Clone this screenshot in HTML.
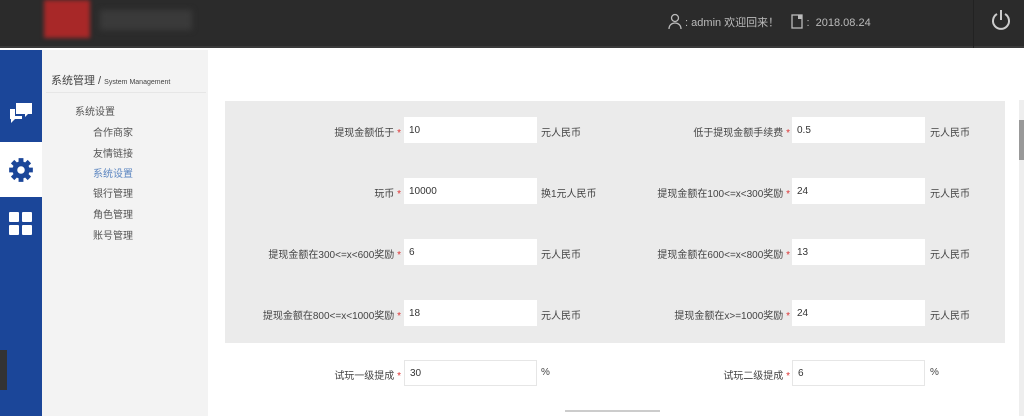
<!DOCTYPE html>
<html><head><meta charset="utf-8"><style>
*{margin:0;padding:0;box-sizing:border-box}
body{width:1024px;height:416px;overflow:hidden;background:#fff;font-family:"Liberation Sans","Noto Sans CJK SC",sans-serif;font-size:10px;color:#444;position:relative}
.hd{position:absolute;left:0;top:0;width:1024px;height:48px;background:#2b2b2b;border-bottom:2px solid #3a3a3a}
.logo{position:absolute;left:44px;top:0;width:46px;height:38px;background:#a82828;filter:blur(2px)}
.logot{position:absolute;left:100px;top:10px;width:92px;height:20px;background:#3a3a3a;filter:blur(3px)}
.user{position:absolute;left:668px;top:13px;color:#bbb;font-size:11px}
.pw{position:absolute;left:973px;top:0;width:51px;height:48px;border-left:1px solid #222}
.bar{position:absolute;left:0;top:50px;width:42px;height:366px;background:#1b4699}
.sel{position:absolute;left:0;top:92px;width:42px;height:55px;background:#fff}
.side{position:absolute;left:42px;top:50px;width:166px;height:366px;background:#f3f3f3}
.side .t{position:absolute;left:9px;top:22px;font-size:11px;color:#444}
.side .t small{font-size:7px}
.side .ln{position:absolute;left:4px;top:42px;width:160px;border-top:1px solid #e6e6e6}
.side .i{position:absolute;font-size:10px;color:#555}
.panel{position:absolute;left:225px;top:101px;width:780px;height:242px;background:#ebebeb}
.lb{position:absolute;text-align:right;font-size:10px;color:#444;width:240px}
.lb b{color:#d33;font-weight:normal}
.in{position:absolute;width:133px;height:26px;background:#fff;font-size:10px;padding:8px 0 0 5px;color:#333}
.un{position:absolute;font-size:10px;color:#444}
.sb{position:absolute;left:1019px;top:100px;width:5px;height:316px;background:#eee}
.sb i{position:absolute;left:0;top:20px;width:5px;height:40px;background:#999}
</style></head><body>
<div class="hd"><div class="logo"></div><div class="logot"></div>
<div class="user"><svg width="14" height="16" viewBox="0 0 14 16" style="vertical-align:-3px"><circle cx="7" cy="5" r="3.5" fill="none" stroke="#bbb" stroke-width="1.3"/><path d="M1 16c0-4 3-6 6-6s6 2 6 6" fill="none" stroke="#bbb" stroke-width="1.3"/></svg> : admin 欢迎回来！ &nbsp;&nbsp; <svg width="12" height="15" viewBox="0 0 12 15" style="vertical-align:-3px"><rect x="1" y="1" width="10" height="13" fill="none" stroke="#bbb" stroke-width="1.3"/><rect x="7" y="1" width="4" height="4" fill="#bbb"/></svg> : &nbsp;2018.08.24</div>
<div class="pw"><svg width="51" height="48" viewBox="0 0 51 48"><path d="M23 14a8 8 0 1 0 8 0" fill="none" stroke="#ccc" stroke-width="2"/><path d="M27 10v10" stroke="#ccc" stroke-width="2"/></svg></div>
</div>
<div class="bar"><div class="sel"></div>
<svg style="position:absolute;left:8px;top:50px" width="26" height="26" viewBox="0 0 26 26"><path d="M8 3h16v11h-4l-3 3v-3H8z" fill="#fff"/><path d="M2 9h5v7h7v3H7l-4 4v-4H2z" fill="#fff"/></svg>
<svg style="position:absolute;left:7px;top:106px" width="28" height="28" viewBox="0 0 26 26"><circle cx="13" cy="13" r="8" fill="#1b4699"/><g stroke="#1b4699" stroke-width="4.5"><path d="M13 2v22M2 13h22M5.2 5.2l15.6 15.6M20.8 5.2L5.2 20.8"/></g><circle cx="13" cy="13" r="3.5" fill="#fff"/></svg>
<svg style="position:absolute;left:8px;top:160px" width="26" height="26" viewBox="0 0 26 26"><g fill="#fff"><rect x="1" y="2" width="10" height="10" rx="1"/><rect x="14" y="2" width="10" height="10" rx="1"/><rect x="1" y="15" width="10" height="10" rx="1"/><rect x="14" y="15" width="10" height="10" rx="1"/></g></svg>
</div>
<div style="position:absolute;left:0;top:350px;width:7px;height:40px;background:#333"></div>
<div class="side"><div class="t">系统管理 / <small>System Management</small></div><div class="ln"></div>
<div class="i" style="left:33px;top:53px">系统设置</div>
<div class="i" style="left:51px;top:74px">合作商家</div>
<div class="i" style="left:51px;top:95px">友情链接</div>
<div class="i" style="left:51px;top:115px;color:#5b85c0">系统设置</div>
<div class="i" style="left:51px;top:135px">银行管理</div>
<div class="i" style="left:51px;top:156px">角色管理</div>
<div class="i" style="left:51px;top:177px">账号管理</div>
</div>
<div class="panel"></div>
<div class="lb" style="left:161px;top:124px">提现金额低于 <b>*</b></div><div class="in" style="left:404px;top:117px">10</div><div class="un" style="left:541px;top:124px">元人民币</div>
<div class="lb" style="left:550px;top:124px">低于提现金额手续费 <b>*</b></div><div class="in" style="left:792px;top:117px">0.5</div><div class="un" style="left:930px;top:124px">元人民币</div>
<div class="lb" style="left:161px;top:185px">玩币 <b>*</b></div><div class="in" style="left:404px;top:178px">10000</div><div class="un" style="left:541px;top:185px">换1元人民币</div>
<div class="lb" style="left:550px;top:185px">提现金额在100&lt;=x&lt;300奖励 <b>*</b></div><div class="in" style="left:792px;top:178px">24</div><div class="un" style="left:930px;top:185px">元人民币</div>
<div class="lb" style="left:161px;top:246px">提现金额在300&lt;=x&lt;600奖励 <b>*</b></div><div class="in" style="left:404px;top:239px">6</div><div class="un" style="left:541px;top:246px">元人民币</div>
<div class="lb" style="left:550px;top:246px">提现金额在600&lt;=x&lt;800奖励 <b>*</b></div><div class="in" style="left:792px;top:239px">13</div><div class="un" style="left:930px;top:246px">元人民币</div>
<div class="lb" style="left:161px;top:307px">提现金额在800&lt;=x&lt;1000奖励 <b>*</b></div><div class="in" style="left:404px;top:300px">18</div><div class="un" style="left:541px;top:307px">元人民币</div>
<div class="lb" style="left:550px;top:307px">提现金额在x&gt;=1000奖励 <b>*</b></div><div class="in" style="left:792px;top:300px">24</div><div class="un" style="left:930px;top:307px">元人民币</div>
<div class="lb" style="left:161px;top:367px">试玩一级提成 <b>*</b></div><div class="in" style="left:404px;top:360px;border:1px solid #e6e6e6;padding-top:7px">30</div><div class="un" style="left:541px;top:367px">%</div>
<div class="lb" style="left:550px;top:367px">试玩二级提成 <b>*</b></div><div class="in" style="left:792px;top:360px;border:1px solid #e6e6e6;padding-top:7px">6</div><div class="un" style="left:930px;top:367px">%</div>
<div style="position:absolute;left:565px;top:410px;width:95px;height:6px;border-top:2px solid #ccc"></div>
<div class="sb"><i></i></div>
</body></html>
